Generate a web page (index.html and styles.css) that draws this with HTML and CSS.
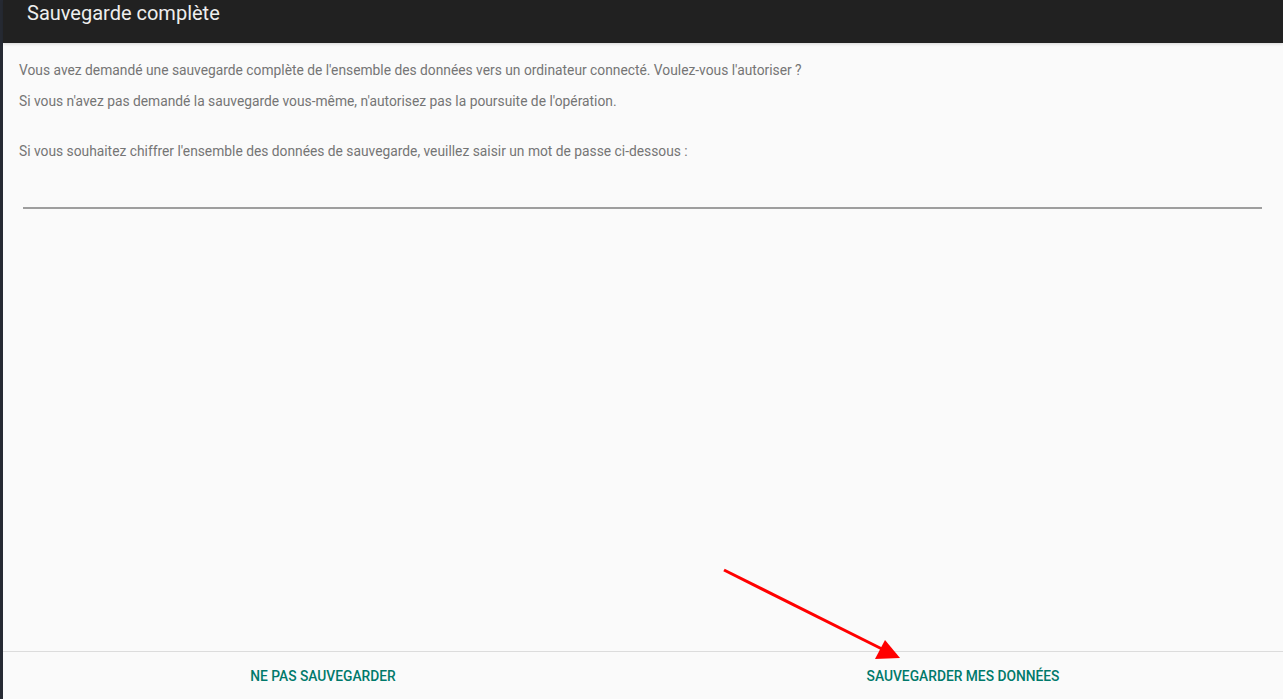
FILE: index.html
```html
<!DOCTYPE html>
<html lang="fr">
<head>
  <meta charset="UTF-8" />
  <title>Sauvegarde complète</title>
  <link rel="stylesheet" href="styles.css">
</head>
<body>
  <div class="screen">
    <div class="toolbar">
      <h1>Sauvegarde complète</h1>
    </div>

    <div class="content">
      <p>Vous avez demandé une sauvegarde complète de l'ensemble des données vers un ordinateur connecté. Voulez-vous l'autoriser ?</p>
      <p>Si vous n'avez pas demandé la sauvegarde vous-même, n'autorisez pas la poursuite de l'opération.</p>
      <p class="gap">Si vous souhaitez chiffrer l'ensemble des données de sauvegarde, veuillez saisir un mot de passe ci-dessous :</p>
      <div class="password"></div>
    </div>

    <div class="actions">
      <a href="#" class="btn">Ne pas sauvegarder</a>
      <a href="#" class="btn">Sauvegarder mes données</a>
    </div>

    <!-- flèche d'annotation -->
    <svg class="arrow" width="1283" height="699" viewBox="0 0 1283 699">
      <line x1="724" y1="570" x2="882" y2="649" stroke="#f00" stroke-width="3"/>
      <polygon points="900,658 875,659 885,640" fill="#f00"/>
    </svg>
  </div>
</body>
</html>
```

FILE: styles.css
```css
* {
  box-sizing: border-box;
  margin: 0;
  padding: 0;
}

body {
  font-family: Roboto, 'Liberation Sans', sans-serif;
  background: #262a33;
  width: 1283px;
  height: 699px;
  overflow: hidden;
}

.screen {
  position: relative;
  margin-left: 3px;
  height: 699px;
  background: #fafafa;
  display: flex;
  flex-direction: column;
}

.toolbar {
  height: 43px;
  background: #212121;
  padding: 0 24px;
  box-shadow: 0 1px 3px rgba(0, 0, 0, 0.15);
}

.toolbar h1 {
  font-size: 20px;
  font-weight: 400;
  color: #eeeeee;
  line-height: 27px;
}

.content {
  flex: 1;
  padding: 19px 16px 0;
}

.content p {
  font-size: 13.8px;
  color: #757575;
  line-height: 17px;
  margin-bottom: 14px;
}

.content p.gap {
  margin-top: 33px;
}

.password {
  margin: 47px 5px 0 4px;
  border-bottom: 2px solid #9e9e9e;
}

.actions {
  height: 48px;
  border-top: 1px solid #dcdcdc;
  display: flex;
}

.btn {
  flex: 1;
  text-align: center;
  text-decoration: none;
  text-transform: uppercase;
  font-size: 13.8px;
  font-weight: 500;
  color: #00796b;
  line-height: 48px;
}

.arrow {
  position: absolute;
  top: 0;
  left: -3px;
  pointer-events: none;
}
```
